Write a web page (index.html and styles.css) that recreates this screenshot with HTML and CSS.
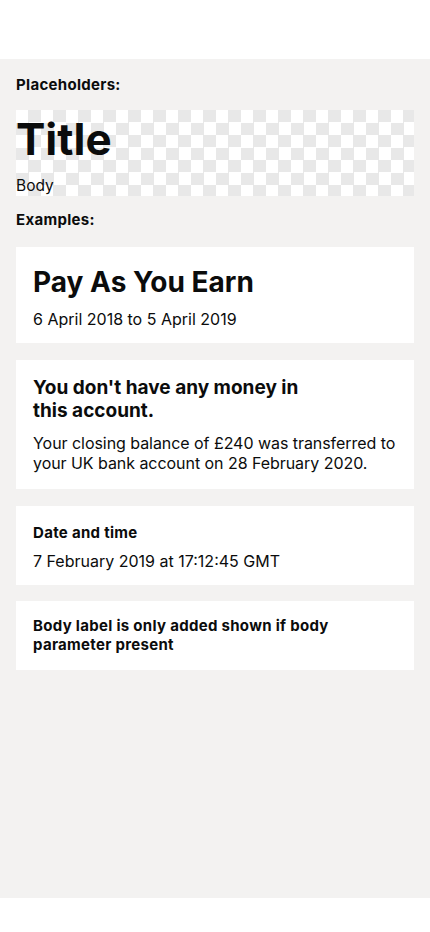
FILE: index.html
```html
<!DOCTYPE html>
<html lang="en">
<head>
<meta charset="utf-8">
<meta name="viewport" content="width=device-width, initial-scale=1">
<title>Summary card examples</title>
<link rel="stylesheet" href="styles.css">
</head>
<body>
<main class="screen">
  <p class="section-label">Placeholders:</p>
  <div class="placeholder">
    <h1 class="placeholder-title">Title</h1>
    <p class="placeholder-body">Body</p>
  </div>
  <p class="section-label section-label--examples">Examples:</p>

  <section class="card card--tax">
    <h2 class="tax-title">Pay As You Earn</h2>
    <p class="tax-body">6 April 2018 to 5 April 2019</p>
  </section>

  <section class="card card--account">
    <h2 class="account-title">You don't have any money in this account.</h2>
    <p class="account-body">Your closing balance of £240 was transferred to your UK bank account on 28 February 2020.</p>
  </section>

  <section class="card card--date">
    <h3 class="date-label">Date and time</h3>
    <p class="date-value">7 February 2019 at 17:12:45 GMT</p>
  </section>

  <section class="card card--label">
    <h3 class="label-only">Body label is only added shown if body parameter present</h3>
  </section>
</main>
</body>
</html>
```

FILE: styles.css
```css
* {
  box-sizing: border-box;
}

html,
body {
  margin: 0;
  padding: 0;
  background: #ffffff;
}

body {
  font-family: Inter, "Noto Sans", "Liberation Sans", sans-serif;
  color: #0b0c0c;
}

h1,
h2,
h3,
p {
  margin: 0;
}

.screen {
  margin-top: 59px;
  height: 839px;
  background: #f3f2f1;
  padding: 17px 16px 0;
  display: flex;
  flex-direction: column;
}

.section-label {
  font-size: 15px;
  line-height: 17px;
  font-weight: 700;
  letter-spacing: 0.3px;
}

.section-label--examples {
  margin-top: 15px;
}

.placeholder {
  margin-top: 17px;
  height: 86px;
  background: repeating-conic-gradient(#e8e8e8 0 25%, #ffffff 0 50%) 0 0 / 25px 25px;
}

.placeholder-title {
  font-size: 44px;
  line-height: 58px;
  font-weight: 700;
}

.placeholder-body {
  margin-top: 9px;
  font-size: 15.5px;
  line-height: 18px;
}

.card {
  background: #ffffff;
  padding: 16px 15px 16px 17px;
}

.card--tax {
  margin-top: 19px;
  padding-top: 18px;
  padding-bottom: 14px;
}

.tax-title {
  font-size: 28px;
  line-height: 34px;
  font-weight: 700;
}

.tax-body {
  margin-top: 10px;
  font-size: 16px;
  line-height: 20px;
}

.card--account {
  margin-top: 17px;
}

.account-title {
  max-width: 285px;
  font-size: 19px;
  line-height: 23px;
  font-weight: 700;
}

.account-body {
  margin-top: 11px;
  font-size: 16px;
  line-height: 20px;
  letter-spacing: -0.05px;
}

.card--date {
  margin-top: 17px;
  padding-top: 18px;
  padding-bottom: 14px;
}

.date-label {
  font-size: 15px;
  line-height: 17px;
  font-weight: 700;
  letter-spacing: 0.3px;
}

.date-value {
  margin-top: 10px;
  font-size: 16px;
  line-height: 20px;
}

.card--label {
  margin-top: 16px;
  padding-top: 16px;
}

.label-only {
  max-width: 364px;
  font-size: 15px;
  line-height: 18.5px;
  font-weight: 700;
  letter-spacing: 0.3px;
}
```
